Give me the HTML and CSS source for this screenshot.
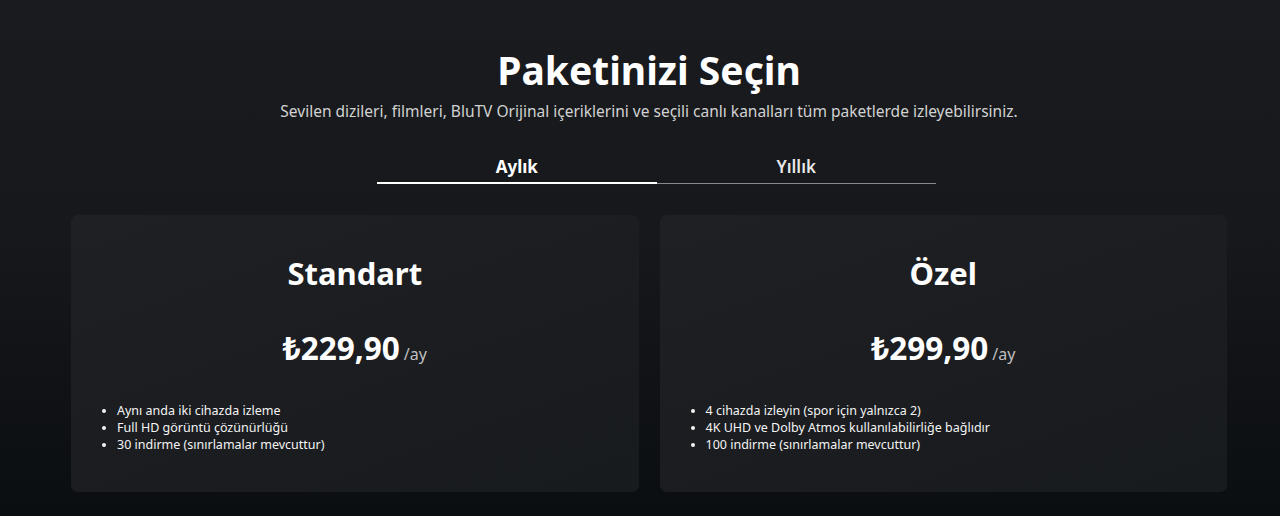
FILE: index.html
```html
<!DOCTYPE html>
<html lang="tr">
<head>
<meta charset="utf-8">
<title>Paketinizi Seçin</title>
<link rel="stylesheet" href="styles.css">
</head>
<body>
<main class="page">
  <header class="head">
    <h1 class="title">Paketinizi Seçin</h1>
    <p class="subtitle">Sevilen dizileri, filmleri, BluTV Orijinal içeriklerini ve seçili canlı kanalları tüm paketlerde izleyebilirsiniz.</p>
  </header>
  <nav class="tabs">
    <button class="tab tab-active">Aylık</button>
    <button class="tab">Yıllık</button>
  </nav>
  <section class="plans">
    <article class="plan">
      <h2 class="plan-name">Standart</h2>
      <div class="price"><span class="amount">₺229,90</span><span class="per">/ay</span></div>
      <ul class="features">
        <li>Aynı anda iki cihazda izleme</li>
        <li>Full HD görüntü çözünürlüğü</li>
        <li>30 indirme (sınırlamalar mevcuttur)</li>
      </ul>
    </article>
    <article class="plan">
      <h2 class="plan-name">Özel</h2>
      <div class="price"><span class="amount">₺299,90</span><span class="per">/ay</span></div>
      <ul class="features">
        <li>4 cihazda izleyin (spor için yalnızca 2)</li>
        <li>4K UHD ve Dolby Atmos kullanılabilirliğe bağlıdır</li>
        <li>100 indirme (sınırlamalar mevcuttur)</li>
      </ul>
    </article>
  </section>
</main>
</body>
</html>
```

FILE: styles.css
```css
* { box-sizing: border-box; }
html, body { margin: 0; height: 100%; }
body {
  background: linear-gradient(180deg, #1a1b1e 0%, #16181b 45%, #0b0e10 100%);
  color: #fff;
  font-family: "Noto Sans", "Open Sans", sans-serif;
  overflow: hidden;
}
.page {
  padding: 47px 53px 0 71px;
}
.head { text-align: center; }
.title {
  margin: 0;
  font-size: 39px;
  font-weight: 700;
  line-height: 46px;
}
.subtitle {
  margin: 8px 0 0;
  font-size: 15.5px;
  line-height: 20px;
  color: #d2d2d2;
}
.tabs {
  display: flex;
  width: 559px;
  margin: 35px 0 0 306px;
}
.tab {
  flex: 1;
  background: none;
  border: 0;
  border-bottom: 1px solid #8a8a8a;
  color: #e8e8e8;
  font-family: inherit;
  font-size: 17px;
  font-weight: 600;
  padding: 0 0 5px;
  line-height: 22px;
  cursor: pointer;
}
.tab-active {
  color: #fff;
  font-weight: 700;
  border-bottom: 2px solid #fff;
  padding-bottom: 4px;
}
.plans {
  display: grid;
  grid-template-columns: 1fr 1fr;
  gap: 21px;
  margin-top: 31px;
}
.plan {
  height: 277px;
  border-radius: 7px;
  background: linear-gradient(160deg, #1e2023 0%, #1b1d20 50%, #181b1d 100%);
  padding: 39px 33px 0;
  text-align: center;
}
.plan-name {
  margin: 0;
  font-size: 31px;
  font-weight: 700;
  line-height: 38px;
}
.price {
  margin-top: 36px;
  display: flex;
  justify-content: center;
  align-items: baseline;
  gap: 4px;
}
.amount {
  font-size: 31.5px;
  font-weight: 700;
  line-height: 40px;
}
.per {
  font-size: 16px;
  color: #bfbfbf;
}
.features {
  margin: 34px 0 0;
  padding: 0 0 0 13px;
  text-align: left;
  font-size: 12.5px;
  line-height: 17px;
  color: #f4f4f4;
}
```
